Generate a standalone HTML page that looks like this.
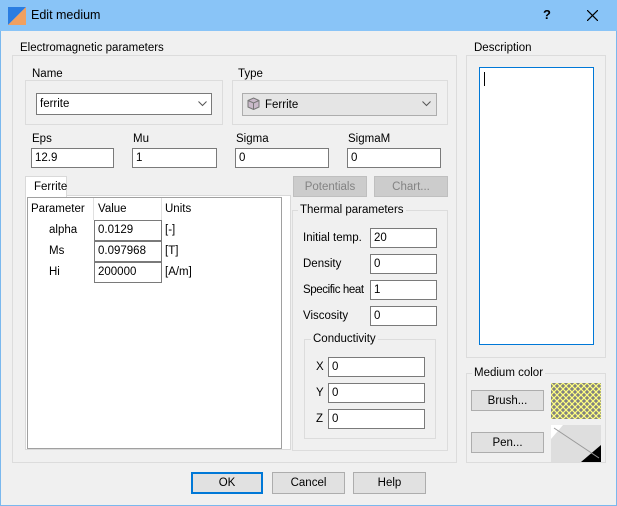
<html><head><style>
*{box-sizing:border-box}
body{margin:0;width:617px;height:506px;background:#f0f0f0;font:11.5px "Liberation Sans",sans-serif;color:#000;position:relative;overflow:hidden}
div,span{position:absolute}
.win{left:0;top:0;width:617px;height:506px;border:1px solid #7ab8ee}
.tb{left:0;top:0;width:617px;height:31px;background:#89c4f7}
.g{border:1px solid #dcdcdc}
.gt{background:#f0f0f0;padding:0 2px;white-space:nowrap}
.in{background:#fff;border:1px solid #7a7a7a;padding:3px 0 0 3px;height:20px;white-space:nowrap}
.btn{background:#e1e1e1;border:1px solid #adadad;text-align:center;padding-top:4px}
.dis{color:#838383;background:#cccccc;border-color:#bfbfbf}
</style></head><body>
<div class="win"></div>
<div class="tb"></div>
<svg style="position:absolute;left:8px;top:7px" width="18" height="18"><polygon points="0,0 18,0 0,18" fill="#2a7de1"/><polygon points="18,0 18,18 0,18" fill="#f0a060"/></svg>
<span style="left:31px;top:8px;font-size:12.5px">Edit medium</span>
<span style="left:543px;top:7px;font-size:13px;font-weight:bold">?</span>
<svg style="position:absolute;left:587px;top:10px" width="11" height="11"><path d="M0,0L11,11M11,0L0,11" stroke="#000" stroke-width="1.2"/></svg>

<div class="g" style="left:12px;top:55px;width:445px;height:408px"></div>
<span class="gt" style="left:18px;top:42px">Electromagnetic parameters</span>

<div class="g" style="left:25px;top:80px;width:198px;height:45px"></div>
<span class="gt" style="left:30px;top:68px">Name</span>
<div class="in" style="left:36px;top:93px;width:176px;height:22px;padding-top:4px">ferrite</div>
<svg style="position:absolute;left:198px;top:101px" width="9" height="6"><path d="M0.5,0.5L4.5,4.5L8.5,0.5" fill="none" stroke="#555"/></svg>

<div class="g" style="left:232px;top:80px;width:216px;height:45px"></div>
<span class="gt" style="left:236px;top:68px">Type</span>
<div class="btn" style="left:242px;top:93px;width:195px;height:23px;text-align:left;padding:5px 0 0 22px;background:#e5e5e5">Ferrite</div>
<svg style="position:absolute;left:247px;top:97px" width="13" height="13"><polygon points="6.5,1 12,3.5 12,10 6.5,12.5 1,10 1,3.5" fill="#c9b9c9" stroke="#777"/><polyline points="1,3.5 6.5,6 12,3.5" fill="none" stroke="#777"/><line x1="6.5" y1="6" x2="6.5" y2="12.5" stroke="#777"/></svg>
<svg style="position:absolute;left:422px;top:101px" width="9" height="6"><path d="M0.5,0.5L4.5,4.5L8.5,0.5" fill="none" stroke="#555"/></svg>

<span style="left:32px;top:133px">Eps</span>
<span style="left:133px;top:133px">Mu</span>
<span style="left:236px;top:133px">Sigma</span>
<span style="left:348px;top:133px">SigmaM</span>
<div class="in" style="left:31px;top:148px;width:83px">12.9</div>
<div class="in" style="left:132px;top:148px;width:85px">1</div>
<div class="in" style="left:235px;top:148px;width:94px">0</div>
<div class="in" style="left:347px;top:148px;width:94px">0</div>

<div style="left:25px;top:195px;width:266px;height:255px;border:1px solid #d9d9d9;background:#fff"></div>
<div style="left:25px;top:176px;width:42px;height:21px;background:#fff;border:1px solid #d9d9d9;border-bottom:none;padding:4px 0 0 8px">Ferrite</div>
<div style="left:27px;top:197px;width:255px;height:252px;border:1px solid #a0a0a0;background:#fff"></div>
<div style="left:93px;top:198px;width:1px;height:22px;background:#e0e0e0"></div>
<div style="left:161px;top:198px;width:1px;height:22px;background:#e0e0e0"></div>
<span style="left:31px;top:203px">Parameter</span>
<span style="left:98px;top:203px">Value</span>
<span style="left:165px;top:203px">Units</span>
<span style="left:49px;top:224px">alpha</span><div class="in" style="left:94px;top:220px;width:68px;height:21px">0.0129</div><span style="left:165px;top:224px">[-]</span>
<span style="left:49px;top:245px">Ms</span><div class="in" style="left:94px;top:241px;width:68px;height:21px">0.097968</div><span style="left:165px;top:245px">[T]</span>
<span style="left:49px;top:266px">Hi</span><div class="in" style="left:94px;top:262px;width:68px;height:21px">200000</div><span style="left:165px;top:266px">[A/m]</span>

<div class="btn dis" style="left:293px;top:176px;width:74px;height:21px">Potentials</div>
<div class="btn dis" style="left:374px;top:176px;width:74px;height:21px">Chart...</div>

<div class="g" style="left:292px;top:210px;width:156px;height:241px"></div>
<span class="gt" style="left:298px;top:204px">Thermal parameters</span>
<span style="left:303px;top:232px">Initial temp.</span><div class="in" style="left:370px;top:228px;width:67px">20</div>
<span style="left:303px;top:258px">Density</span><div class="in" style="left:370px;top:254px;width:67px">0</div>
<span style="left:303px;top:284px;letter-spacing:-0.4px">Specific heat</span><div class="in" style="left:370px;top:280px;width:67px">1</div>
<span style="left:303px;top:310px">Viscosity</span><div class="in" style="left:370px;top:306px;width:67px">0</div>
<div class="g" style="left:304px;top:339px;width:132px;height:100px"></div>
<span class="gt" style="left:311px;top:333px">Conductivity</span>
<span style="left:316px;top:361px">X</span><div class="in" style="left:328px;top:357px;width:97px">0</div>
<span style="left:316px;top:387px">Y</span><div class="in" style="left:328px;top:383px;width:97px">0</div>
<span style="left:316px;top:413px">Z</span><div class="in" style="left:328px;top:409px;width:97px">0</div>

<div class="g" style="left:466px;top:55px;width:140px;height:303px"></div>
<span class="gt" style="left:472px;top:42px">Description</span>
<div style="left:479px;top:67px;width:115px;height:278px;background:#fff;border:1px solid #0078d7"></div>
<div style="left:484px;top:72px;width:1px;height:14px;background:#000"></div>

<div class="g" style="left:466px;top:373px;width:140px;height:90px"></div>
<span class="gt" style="left:472px;top:367px">Medium color</span>
<div class="btn" style="left:471px;top:390px;width:73px;height:21px">Brush...</div>
<div class="btn" style="left:471px;top:432px;width:73px;height:21px">Pen...</div>
<svg style="position:absolute;left:551px;top:383px" width="50" height="36"><defs><pattern id="p" width="6" height="6" patternUnits="userSpaceOnUse"><rect width="6" height="6" fill="#808080"/><path d="M0,0L6,6M6,0L0,6" stroke="#ffff80" stroke-width="1.2"/></pattern></defs><rect width="50" height="36" fill="url(#p)"/></svg>
<svg style="position:absolute;left:551px;top:425px" width="50" height="37"><rect width="50" height="37" fill="#dedede"/><polygon points="0,0 12,0 0,14" fill="#fff"/><polygon points="50,20 50,37 30,37" fill="#000"/><line x1="3" y1="3" x2="48" y2="33" stroke="#999"/></svg>

<div class="btn" style="left:191px;top:472px;width:72px;height:22px;border:1px solid #0078d7;box-shadow:inset 0 0 0 1px #0078d7">OK</div>
<div class="btn" style="left:272px;top:472px;width:73px;height:22px">Cancel</div>
<div class="btn" style="left:353px;top:472px;width:73px;height:22px">Help</div>
</body></html>
